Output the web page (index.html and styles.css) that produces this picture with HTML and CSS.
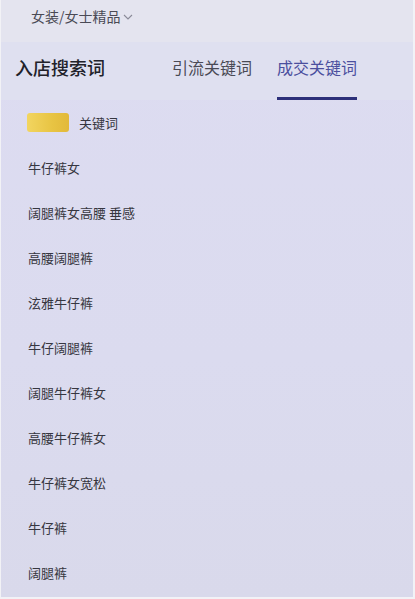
FILE: index.html
```html
<!DOCTYPE html>
<html lang="zh-CN">
<head>
<meta charset="utf-8">
<link rel="stylesheet" href="styles.css">
</head>
<body>
<div class="page">
  <div class="topbar">
    <span class="cat">女装/女士精品</span>
    <svg class="chev" width="10" height="6" viewBox="0 0 10 6"><path d="M1 1 L5 5 L9 1" fill="none" stroke="#8a8a98" stroke-width="1.1"/></svg>
  </div>
  <div class="tabs">
    <div class="title">入店搜索词</div>
    <div class="tab">引流关键词</div>
    <div class="tab active">成交关键词</div>
  </div>
  <div class="list">
    <div class="row head"><span class="badge"></span><span>关键词</span></div>
    <div class="row">牛仔裤女</div>
    <div class="row">阔腿裤女高腰 垂感</div>
    <div class="row">高腰阔腿裤</div>
    <div class="row">泫雅牛仔裤</div>
    <div class="row">牛仔阔腿裤</div>
    <div class="row">阔腿牛仔裤女</div>
    <div class="row">高腰牛仔裤女</div>
    <div class="row">牛仔裤女宽松</div>
    <div class="row">牛仔裤</div>
    <div class="row">阔腿裤</div>
  </div>
</div>
</body>
</html>
```

FILE: styles.css
```css
html, body {
  margin: 0;
  padding: 0;
  background: #f2f2f6;
}
body {
  font-family: "Noto Sans CJK SC", "Noto Sans", sans-serif;
  width: 415px;
  height: 599px;
  overflow: hidden;
}
.page {
  width: 412px;
  height: 597px;
  margin-left: 1px;
  background: linear-gradient(180deg, #dddcf1 0%, #dbdbef 60%, #d9d9eb 100%);
  overflow: hidden;
}
.topbar {
  height: 42px;
  display: flex;
  align-items: center;
  padding-left: 30px;
  gap: 2px;
  background: #e4e4ef;
  box-shadow: 0 2px 4px rgba(200, 200, 220, 0.6);
}
.cat {
  font-size: 14px;
  color: #4a4a55;
  padding-bottom: 10px;
}
.chev {
  margin-bottom: 9px;
}
.tabs {
  height: 58px;
  display: flex;
  padding-left: 14px;
  background: #dfe0f0;
}
.title {
  display: flex;
  align-items: center;
  padding-bottom: 8px;
  font-size: 18px;
  font-weight: 500;
  color: #22222a;
  margin-right: 67px;
}
.tab {
  display: flex;
  align-items: center;
  padding-bottom: 5px;
  border-bottom: 3px solid transparent;
  font-size: 16px;
  color: #4a4a55;
  margin-right: 25px;
}
.tab.active {
  color: #4b4f9e;
  border-bottom-color: #2d307a;
}
.list {
  display: flex;
  flex-direction: column;
}
.row {
  height: 45px;
  display: flex;
  align-items: center;
  padding-left: 27px;
  font-size: 13px;
  color: #363640;
}
.row.head {
  gap: 10px;
  padding-left: 26px;
}
.badge {
  width: 42px;
  height: 19px;
  border-radius: 3px;
  background: linear-gradient(90deg, #f2d560 0%, #e8c443 60%, #e2b93a 100%);
}
```
